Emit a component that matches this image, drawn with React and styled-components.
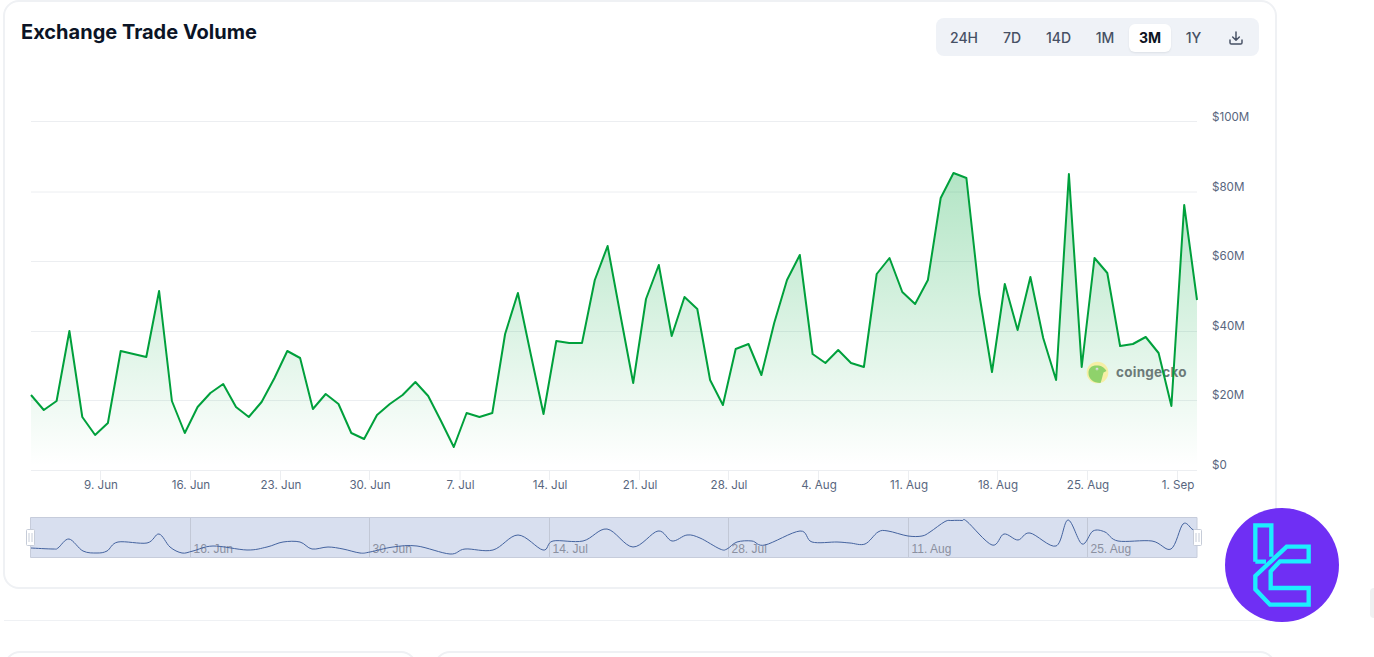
import React from "react";
import styled, { createGlobalStyle } from "styled-components";

const Global = createGlobalStyle`
  html, body { margin: 0; padding: 0; background: #fff; height: 657px; overflow: hidden; }
  body { font-family: Inter, "Liberation Sans", sans-serif; }
  * { box-sizing: border-box; }
`;

const Page = styled.div`
  position: relative;
  width: 1374px;
  height: 657px;
  overflow: hidden;
  padding: 0 97px 0 3px;
`;
const Card = styled.section`
  height: 589px;
  border: 2px solid #eff1f4;
  border-radius: 16px;
  background: #fff;
`;
const Header = styled.header`
  display: flex;
  justify-content: space-between;
  align-items: flex-start;
  height: 60px;
  padding: 16px 16px 0 16px;
`;
const Title = styled.h2`
  margin: 0;
  font-size: 20px;
  line-height: 28px;
  font-weight: 700;
  color: #0b1426;
`;
const Tabs = styled.div`
  display: flex;
  gap: 4.5px;
  padding: 6px 3px 4px 4px;
  height: 38px;
  background: #eff2f7;
  border-radius: 8px;
`;
const Tab = styled.button`
  border: 0;
  height: 28px;
  width: ${(p) => p.$w}px;
  padding: 0;
  border-radius: 6px;
  font: ${(p) => (p.$active ? 700 : 500)} 14px/28px Inter, sans-serif;
  color: ${(p) => (p.$active ? "#0d1421" : "#465064")};
  background: ${(p) => (p.$active ? "#fff" : "transparent")};
  box-shadow: ${(p) => (p.$active ? "0 1px 2px rgba(13,20,33,.08)" : "none")};
`;
const IconTab = styled(Tab)`
  display: flex;
  align-items: center;
  justify-content: center;
`;
const ChartSvg = styled.svg`
  display: block;
  width: 1270px;
  height: 525px;
`;
const AxisLabel = styled.text`
  font: 400 11.6px Inter, sans-serif;
  fill: #58667e;
`;
const NavLabel = styled.text`
  font: 400 12px "Liberation Sans", Arial, sans-serif;
  fill: #8b90a0;
`;
const Watermark = styled.text`
  font: 700 13.5px Inter, sans-serif;
  letter-spacing: 0.25px;
  fill: #6c7a78;
`;
const Divider = styled.hr`
  margin: 31px 0 30px 1px;
  width: 1272px;
  border: 0;
  border-top: 1px solid #eff1f4;
`;
const LowerRow = styled.div`
  display: grid;
  grid-template-columns: 413px 842px;
  gap: 17px;
  margin-left: 1px;
`;
const LowerCard = styled.div`
  height: 60px;
  border: 2px solid #eff1f4;
  border-radius: 16px;
  background: #fff;
`;
const Badge = styled.svg`
  position: absolute;
  left: 1225px;
  top: 508px;
  width: 114px;
  height: 114px;
`;
const EdgeBar = styled.div`
  position: absolute;
  left: 1370px;
  top: 588px;
  width: 4px;
  height: 30px;
  border-radius: 4px 0 0 4px;
  background: #f0f1f2;
`;

const ys = [395,410,401,331,417,435,423,351,354,357,291,401,433,407,393,384,407,417,402,378,351,358,409,394,404,433,439,415,404,395,382,396,421,447,413,417,413,334,293,354,414,341,343,343,280,246,315,383,299,265,336,297,309,380,405,349,344,375,323,280,255,354,363,350,363,367,274,258,292,304,280,198,173,178,294,372,284,330,277,338,380,174,367,258,273,346,344,337,353,406,205,300];
const px = (i) => 31 + (1197 - 31) * (i / (ys.length - 1));
const line = ys.map((y, i) => `${i ? "L" : "M"}${px(i).toFixed(1)} ${y}`).join(" ");
const area = `${line} L1197 470.5 L31 470.5 Z`;

const navPts = [[31,548],[53,549],[58,548],[69,539],[83,551],[97,553],[107,551],[118,542],[147,543],[159,534],[170,547],[182,553],[193,551],[213,546],[247,550],[267,547],[283,542],[300,542],[312,549],[328,547],[343,549],[360,553],[370,552],[393,547],[417,546],[450,554],[465,549],[493,550],[518,535],[543,550],[553,541],[583,541],[607,529],[633,547],[658,531],[672,541],[687,535],[700,538],[720,549],[727,549],[737,542],[752,541],[765,545],[800,531],[812,542],[837,542],[850,543],[865,544],[878,532],[888,531],[908,536],[922,536],[930,532],[945,521.5],[952,520.5],[962,520.5],[967,521.5],[992,545],[1004,534],[1018,540],[1030,533],[1056,546],[1068,520],[1082,544],[1093,531],[1105,532],[1118,541],[1152,541],[1171,549],[1183,524],[1192,529],[1197,533]];
const smooth = (pts) => {
  let d = `M${pts[0][0]} ${pts[0][1]}`;
  for (let i = 0; i < pts.length - 1; i++) {
    const p0 = pts[i - 1] || pts[i], p1 = pts[i], p2 = pts[i + 1], p3 = pts[i + 2] || p2;
    const c1 = [p1[0] + (p2[0] - p0[0]) / 6, p1[1] + (p2[1] - p0[1]) / 6];
    const c2 = [p2[0] - (p3[0] - p1[0]) / 6, p2[1] - (p3[1] - p1[1]) / 6];
    d += ` C${c1[0].toFixed(1)} ${c1[1].toFixed(1)} ${c2[0].toFixed(1)} ${c2[1].toFixed(1)} ${p2[0]} ${p2[1]}`;
  }
  return d;
};

const gridYs = [[121.5,"$100M",117],[192,"$80M",187],[261.5,"$60M",256],[331.5,"$40M",326],[400.5,"$20M",395],[470.5,"$0",465]];
const xTicks = [[100.5,"9. Jun"],[190.5,"16. Jun"],[280.5,"23. Jun"],[369.5,"30. Jun"],[460,"7. Jul"],[549.5,"14. Jul"],[639.5,"21. Jul"],[728.5,"28. Jul"],[818.5,"4. Aug"],[908.5,"11. Aug"],[997.5,"18. Aug"],[1087.5,"25. Aug"],[1177.5,"1. Sep"]];
const navTicks = [[190.5,"16. Jun"],[369.5,"30. Jun"],[549.5,"14. Jul"],[728.5,"28. Jul"],[908.5,"11. Aug"],[1087.5,"25. Aug"]];

const Handle = ({ x }) => (
  <g>
    <rect x={x - 3.5} y="529.5" width="8" height="16" rx="1" fill="#fff" stroke="#c6ccd8" />
    <path d={`M${x - 1} 533V542M${x + 2} 533V542`} stroke="#c6ccd8" />
  </g>
);

const ranges = [["24H", 48], ["7D", 39], ["14D", 45], ["1M", 39], ["3M", 42], ["1Y", 36]];

export default function App() {
  return (
    <Page>
      <Global />
      <Card>
        <Header>
          <Title>Exchange Trade Volume</Title>
          <Tabs>
            {ranges.map(([r, w]) => (
              <Tab key={r} $w={w} $active={r === "3M"}>{r}</Tab>
            ))}
            <IconTab $w={40} aria-label="Download">
              <svg width="16" height="16" viewBox="0 0 24 24" fill="none" stroke="#465064" strokeWidth="2.2" strokeLinecap="round" strokeLinejoin="round">
                <path d="M12 3v12M7 10.5l5 5 5-5M3 15v4a2 2 0 0 0 2 2h14a2 2 0 0 0 2-2v-4" />
              </svg>
            </IconTab>
          </Tabs>
        </Header>
        <ChartSvg viewBox="5 62 1270 525">
          <defs>
            <linearGradient id="fill" gradientUnits="userSpaceOnUse" x1="0" y1="173" x2="0" y2="466">
              <stop offset="0" stopColor="#00a83e" stopOpacity="0.3" />
              <stop offset="1" stopColor="#00a83e" stopOpacity="0" />
            </linearGradient>
          </defs>
          {gridYs.map(([y, t, ly]) => (
            <g key={t}>
              <path d={`M31 ${y}H1197`} stroke="#eceef1" />
              <AxisLabel x="1212" y={ly + 4}>{t}</AxisLabel>
            </g>
          ))}
          {xTicks.map(([x, t]) => (
            <g key={t}>
              <path d={`M${x} 471V480`} stroke="#eceef1" />
              <AxisLabel x={x + 0.5} y="489" textAnchor="middle">{t}</AxisLabel>
            </g>
          ))}
          <path d={area} fill="url(#fill)" />
          <g>
            <circle cx="1097.5" cy="372.5" r="10.8" fill="#f6efa6" />
            <path d="M1088.5 373c0-5 3-7.500 8-7.500 5 0 8 2 10 5.500l-3 1.500c-1 3-1.500 7-3 10.500-7 0-12-4-12-10z" fill="#8fd26b" />
            <circle cx="1097" cy="369" r="1.3" fill="#fff" />
            <circle cx="1097" cy="369" r="0.6" fill="#444" />
            <Watermark x="1116" y="376.5">coingecko</Watermark>
          </g>
          <path d={line} fill="none" stroke="#00a03c" strokeWidth="2" strokeLinejoin="round" />
          <rect x="30.5" y="517.5" width="1166.5" height="40" fill="#d8dfef" />
          <path d="M30.5 517.5H1197M30.5 557.5H1197" stroke="#c6ccdb" />
          <path d="M30.5 517.5V557.5M1197 517.5V557.5" stroke="#c6ccdb" />
          {navTicks.map(([x, t]) => (
            <g key={t}>
              <path d={`M${x} 518V557`} stroke="#c2c8d6" />
              <NavLabel x={x + 3} y="553">{t}</NavLabel>
            </g>
          ))}
          <path d={smooth(navPts)} fill="none" stroke="#44639f" strokeWidth="1" />
          <Handle x={30} />
          <Handle x={1197} />
        </ChartSvg>
      </Card>
      <Divider />
      <LowerRow>
        <LowerCard />
        <LowerCard />
      </LowerRow>
      <Badge viewBox="135 54 342 342">
        <circle cx="306" cy="225" r="171" fill="#6f2ff4" />
        <g fill="none" stroke="#1ceeff" strokeWidth="13" strokeLinejoin="miter">
          <path d="M226 215V106H274V200M226 215H258" />
          <path d="M320 170H386V214H300L272 244V294H386V344H270L226 298V258Z" />
        </g>
      </Badge>
      <EdgeBar />
    </Page>
  );
}
